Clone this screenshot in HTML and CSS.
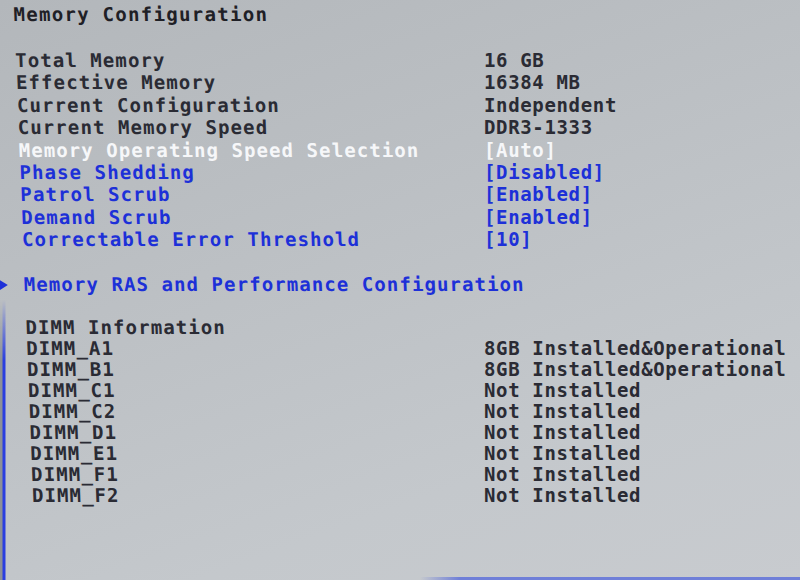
FILE: index.html
```html
<!DOCTYPE html>
<html>
<head>
<meta charset="utf-8">
<title>Memory Configuration</title>
<link rel="stylesheet" href="styles.css">
</head>
<body>
<div class="screen">
  <div class="frame-left"></div>
  <div class="frame-bottom"></div>
  <div class="cols">
    <div class="col labels">
      <div class="title">Memory Configuration</div>
      <div class="top-rows">
        <div class="row info">Total Memory</div>
        <div class="row info">Effective Memory</div>
        <div class="row info">Current Configuration</div>
        <div class="row info">Current Memory Speed</div>
        <div class="row sel">Memory Operating Speed Selection</div>
        <div class="row opt">Phase Shedding</div>
        <div class="row opt">Patrol Scrub</div>
        <div class="row opt">Demand Scrub</div>
        <div class="row opt">Correctable Error Threshold</div>
      </div>
      <div class="row opt sub"><span class="arrow"></span>Memory RAS and Performance Configuration</div>
      <div class="row info dimm-head">DIMM Information</div>
      <div class="dimm-rows">
        <div class="drow info">DIMM_A1</div>
        <div class="drow info">DIMM_B1</div>
        <div class="drow info">DIMM_C1</div>
        <div class="drow info">DIMM_C2</div>
        <div class="drow info">DIMM_D1</div>
        <div class="drow info">DIMM_E1</div>
        <div class="drow info">DIMM_F1</div>
        <div class="drow info">DIMM_F2</div>
      </div>
    </div>
    <div class="col values">
      <div class="title spacer"></div>
      <div class="top-rows">
        <div class="row info">16 GB</div>
        <div class="row info">16384 MB</div>
        <div class="row info">Independent</div>
        <div class="row info">DDR3-1333</div>
        <div class="row sel">[Auto]</div>
        <div class="row opt">[Disabled]</div>
        <div class="row opt">[Enabled]</div>
        <div class="row opt">[Enabled]</div>
        <div class="row opt">[10]</div>
      </div>
      <div class="row sub spacer"></div>
      <div class="row dimm-head spacer"></div>
      <div class="dimm-rows">
        <div class="drow info">8GB Installed&amp;Operational</div>
        <div class="drow info">8GB Installed&amp;Operational</div>
        <div class="drow info">Not Installed</div>
        <div class="drow info">Not Installed</div>
        <div class="drow info">Not Installed</div>
        <div class="drow info">Not Installed</div>
        <div class="drow info">Not Installed</div>
        <div class="drow info">Not Installed</div>
      </div>
    </div>
  </div>
</div>
</body>
</html>
```

FILE: styles.css
```css
html, body {
  margin: 0;
  padding: 0;
}

body {
  width: 800px;
  height: 580px;
  overflow: hidden;
}

.screen {
  position: relative;
  width: 800px;
  height: 580px;
  overflow: hidden;
  background: linear-gradient(160deg, #b3b7bb 0%, #bcc0c4 40%, #c4c8cc 75%, #c8cbcf 100%);
  font-family: "DejaVu Sans Mono", "Liberation Mono", monospace;
  font-weight: bold;
  font-size: 19px;
  color: #2b2c36;
}

.frame-left {
  position: absolute;
  left: 0;
  top: 300px;
  bottom: 0;
  width: 6px;
  background: linear-gradient(90deg, #8d9096 0, #8d9096 2px, #2a3ee0 3px, #2a3ee0 5px, transparent 6px);
  -webkit-mask-image: linear-gradient(180deg, transparent 0, #000 60px);
  mask-image: linear-gradient(180deg, transparent 0, #000 60px);
}

.frame-bottom {
  position: absolute;
  left: 420px;
  right: 0;
  bottom: 0;
  height: 3px;
  background: linear-gradient(90deg, rgba(90, 110, 220, 0) 0, #6f7fd8 40px, #6f7fd8 100%);
}

.cols {
  display: flex;
  padding-top: 3px;
}

.col {
  display: flex;
  flex-direction: column;
}

.labels {
  width: 470px;
  padding-left: 13px;
  letter-spacing: 1.08px;
  transform-origin: 0 0;
  transform: skewX(2.2deg);
}

.values {
  padding-left: 1px;
  letter-spacing: 0.65px;
}

.title {
  height: 22px;
  line-height: 22px;
  margin-bottom: 24px;
  letter-spacing: 1.3px;
  color: #1f2026;
}

.row {
  height: 22.4px;
  line-height: 22.4px;
  white-space: nowrap;
}

.drow {
  height: 21px;
  line-height: 21px;
  white-space: nowrap;
}

.info {
  color: #2a2b34;
}

.sel {
  color: #f6f7f9;
}

.opt {
  color: #1d30d8;
}

.sub {
  margin-top: 22px;
  position: relative;
}

.dimm-head {
  margin-top: 21px;
}

.arrow {
  position: absolute;
  left: -24px;
  top: 7px;
  width: 0;
  height: 0;
  border-top: 5px solid transparent;
  border-bottom: 5px solid transparent;
  border-left: 8px solid #1d30d8;
}
```
